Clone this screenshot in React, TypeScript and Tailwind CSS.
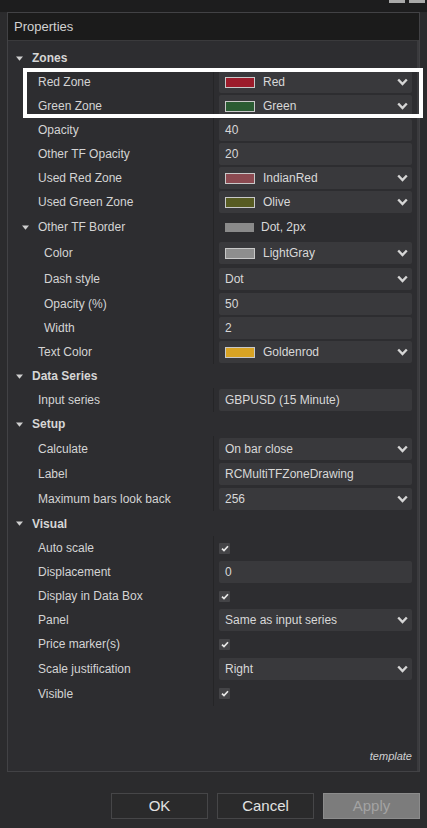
import React from 'react';

type Value =
  | { type: 'text'; text: string }
  | { type: 'select'; text: string; swatch?: string }
  | { type: 'check' }
  | { type: 'plain'; text: string; swatch: string };

type Row =
  | { kind: 'section'; label: string; h: string }
  | { kind: 'prop'; label: string; indent?: 'sub' | 'group'; value: Value; h: string };

const ROWS: Row[] = [
  { kind: 'section', label: 'Zones', h: 'h-[24px]' },
  { kind: 'prop', label: 'Red Zone', value: { type: 'select', text: 'Red', swatch: 'bg-[#9c1c2b]' }, h: 'h-[24px]' },
  { kind: 'prop', label: 'Green Zone', value: { type: 'select', text: 'Green', swatch: 'bg-[#2b5c33]' }, h: 'h-[24px]' },
  { kind: 'prop', label: 'Opacity', value: { type: 'text', text: '40' }, h: 'h-[24px]' },
  { kind: 'prop', label: 'Other TF Opacity', value: { type: 'text', text: '20' }, h: 'h-[24px]' },
  { kind: 'prop', label: 'Used Red Zone', value: { type: 'select', text: 'IndianRed', swatch: 'bg-[#8c4a51]' }, h: 'h-[24px]' },
  { kind: 'prop', label: 'Used Green Zone', value: { type: 'select', text: 'Olive', swatch: 'bg-[#575b22]' }, h: 'h-[24px]' },
  { kind: 'prop', label: 'Other TF Border', indent: 'group', value: { type: 'plain', text: 'Dot, 2px', swatch: 'bg-[#8a8a8a]' }, h: 'h-[26px]' },
  { kind: 'prop', label: 'Color', indent: 'sub', value: { type: 'select', text: 'LightGray', swatch: 'bg-[#8e8e8e]' }, h: 'h-[26px]' },
  { kind: 'prop', label: 'Dash style', indent: 'sub', value: { type: 'select', text: 'Dot' }, h: 'h-[25px]' },
  { kind: 'prop', label: 'Opacity (%)', indent: 'sub', value: { type: 'text', text: '50' }, h: 'h-[25px]' },
  { kind: 'prop', label: 'Width', indent: 'sub', value: { type: 'text', text: '2' }, h: 'h-[24px]' },
  { kind: 'prop', label: 'Text Color', value: { type: 'select', text: 'Goldenrod', swatch: 'bg-[#d8a324]' }, h: 'h-[24px]' },
  { kind: 'section', label: 'Data Series', h: 'h-[24px]' },
  { kind: 'prop', label: 'Input series', value: { type: 'text', text: 'GBPUSD (15 Minute)' }, h: 'h-[24px]' },
  { kind: 'section', label: 'Setup', h: 'h-[24px]' },
  { kind: 'prop', label: 'Calculate', value: { type: 'select', text: 'On bar close' }, h: 'h-[25px]' },
  { kind: 'prop', label: 'Label', value: { type: 'text', text: 'RCMultiTFZoneDrawing' }, h: 'h-[25px]' },
  { kind: 'prop', label: 'Maximum bars look back', value: { type: 'select', text: '256' }, h: 'h-[25px]' },
  { kind: 'section', label: 'Visual', h: 'h-[25px]' },
  { kind: 'prop', label: 'Auto scale', value: { type: 'check' }, h: 'h-[24px]' },
  { kind: 'prop', label: 'Displacement', value: { type: 'text', text: '0' }, h: 'h-[24px]' },
  { kind: 'prop', label: 'Display in Data Box', value: { type: 'check' }, h: 'h-[24px]' },
  { kind: 'prop', label: 'Panel', value: { type: 'select', text: 'Same as input series' }, h: 'h-[24px]' },
  { kind: 'prop', label: 'Price marker(s)', value: { type: 'check' }, h: 'h-[24px]' },
  { kind: 'prop', label: 'Scale justification', value: { type: 'select', text: 'Right' }, h: 'h-[25px]' },
  { kind: 'prop', label: 'Visible', value: { type: 'check' }, h: 'h-[25px]' },
];

const Triangle = () => (
  <svg width="7" height="5" viewBox="0 0 7 5" className="shrink-0">
    <path d="M0 0.5 L7 0.5 L3.5 4.8 Z" fill="#cfcfcf" />
  </svg>
);

const Chevron = () => (
  <svg width="11" height="8" viewBox="0 0 11 8" className="ml-auto mr-[4px] shrink-0">
    <polyline points="1.2,1.5 5.5,6 9.8,1.5" fill="none" stroke="#d6d6d6" strokeWidth="2.4" />
  </svg>
);

const Swatch = ({ color }: { color: string }) => (
  <span className={`w-[30px] h-[11px] border border-[#c8c8c8] shrink-0 ${color}`} />
);

const ValueCell = ({ value }: { value: Value }) => {
  if (value.type === 'check') {
    return (
      <div className="flex items-center pl-[5px]">
        <span className="w-[11px] h-[11px] bg-[#444447] flex items-center justify-center rounded-[1px]">
          <svg width="8" height="7" viewBox="0 0 8 7">
            <polyline points="1,3.6 3,5.6 7,1.2" fill="none" stroke="#e8e8e8" strokeWidth="1.7" />
          </svg>
        </span>
      </div>
    );
  }
  if (value.type === 'plain') {
    return (
      <div className="flex items-center pl-[11px] gap-[7px] text-[#d8d8d8]">
        <span className={`w-[29px] h-[9px] shrink-0 ${value.swatch}`} />
        <span>{value.text}</span>
      </div>
    );
  }
  return (
    <div className="flex items-center px-[5px]">
      <div className="flex-1 h-[22px] bg-[#39393c] rounded-[2px] flex items-center pl-[6px] text-[#d8d8d8]">
        {value.type === 'select' && value.swatch && (
          <>
            <Swatch color={value.swatch} />
            <span className="ml-[8px]">{value.text}</span>
          </>
        )}
        {value.type === 'select' && !value.swatch && <span>{value.text}</span>}
        {value.type === 'text' && <span>{value.text}</span>}
        {value.type === 'select' && <Chevron />}
      </div>
    </div>
  );
};

const PropertyRow = ({ row }: { row: Row }) => {
  if (row.kind === 'section') {
    return (
      <div className={`${row.h} flex items-center pl-[8px] gap-[9px]`}>
        <Triangle />
        <span className="font-bold text-[#d6d6d6]">{row.label}</span>
      </div>
    );
  }
  return (
    <div className={`${row.h} grid grid-cols-[205px_1fr]`}>
      <div className="flex items-center text-[#d4d4d4]">
        {row.indent === 'group' ? (
          <span className="flex items-center pl-[14px] gap-[9px]">
            <Triangle />
            {row.label}
          </span>
        ) : (
          <span className={row.indent === 'sub' ? 'pl-[36px]' : 'pl-[30px]'}>{row.label}</span>
        )}
      </div>
      <div className="border-l border-[#252527] flex flex-col justify-center">
        <ValueCell value={row.value} />
      </div>
    </div>
  );
};

export default function App() {
  return (
    <div className="relative w-[427px] h-[828px] bg-[#2b2b2d] text-[12px] font-['Liberation_Sans',Arial,sans-serif] overflow-hidden">
      <div className="h-[12px] bg-[#1d1d1e] flex justify-end items-start gap-[4px] pr-[2px]">
        <span className="w-[16px] h-[3px] bg-[#a9a9a9]" />
        <span className="w-[16px] h-[3px] bg-[#a9a9a9]" />
      </div>
      <div className="mx-[7px] h-[760px] border border-[#424245] flex flex-col bg-[#2d2d30]">
        <div className="h-[28px] bg-[#1b1b1b] border-b border-[#3a3a3c] flex items-center pl-[6px] text-[13px] text-[#d2d2d2]">
          Properties
        </div>
        <div className="flex-1 flex flex-col pt-[5px] border-r-2 border-[#3a3a3d]">
          {ROWS.map((row, i) => (
            <PropertyRow key={i} row={row} />
          ))}
          <div className="mt-auto mb-[7px] text-right pr-[5px] text-[11px] italic text-[#d0d0d0]">template</div>
        </div>
      </div>
      <div className="flex justify-end gap-[9px] pr-[7px] mt-[21px]">
        <button className="w-[97px] h-[26px] bg-[#2a2a2b] border border-[#464648] text-[15px] text-[#e2e2e2]">OK</button>
        <button className="w-[97px] h-[26px] bg-[#2a2a2b] border border-[#464648] text-[15px] text-[#e2e2e2]">Cancel</button>
        <button className="w-[97px] h-[26px] bg-[#7c7c7c] border border-[#8c8c8c] text-[15px] text-[#a3a3a3]">Apply</button>
      </div>
      <div className="absolute left-[23px] top-[68px] w-[400px] h-[50px] border-[4px] border-white" />
    </div>
  );
}
